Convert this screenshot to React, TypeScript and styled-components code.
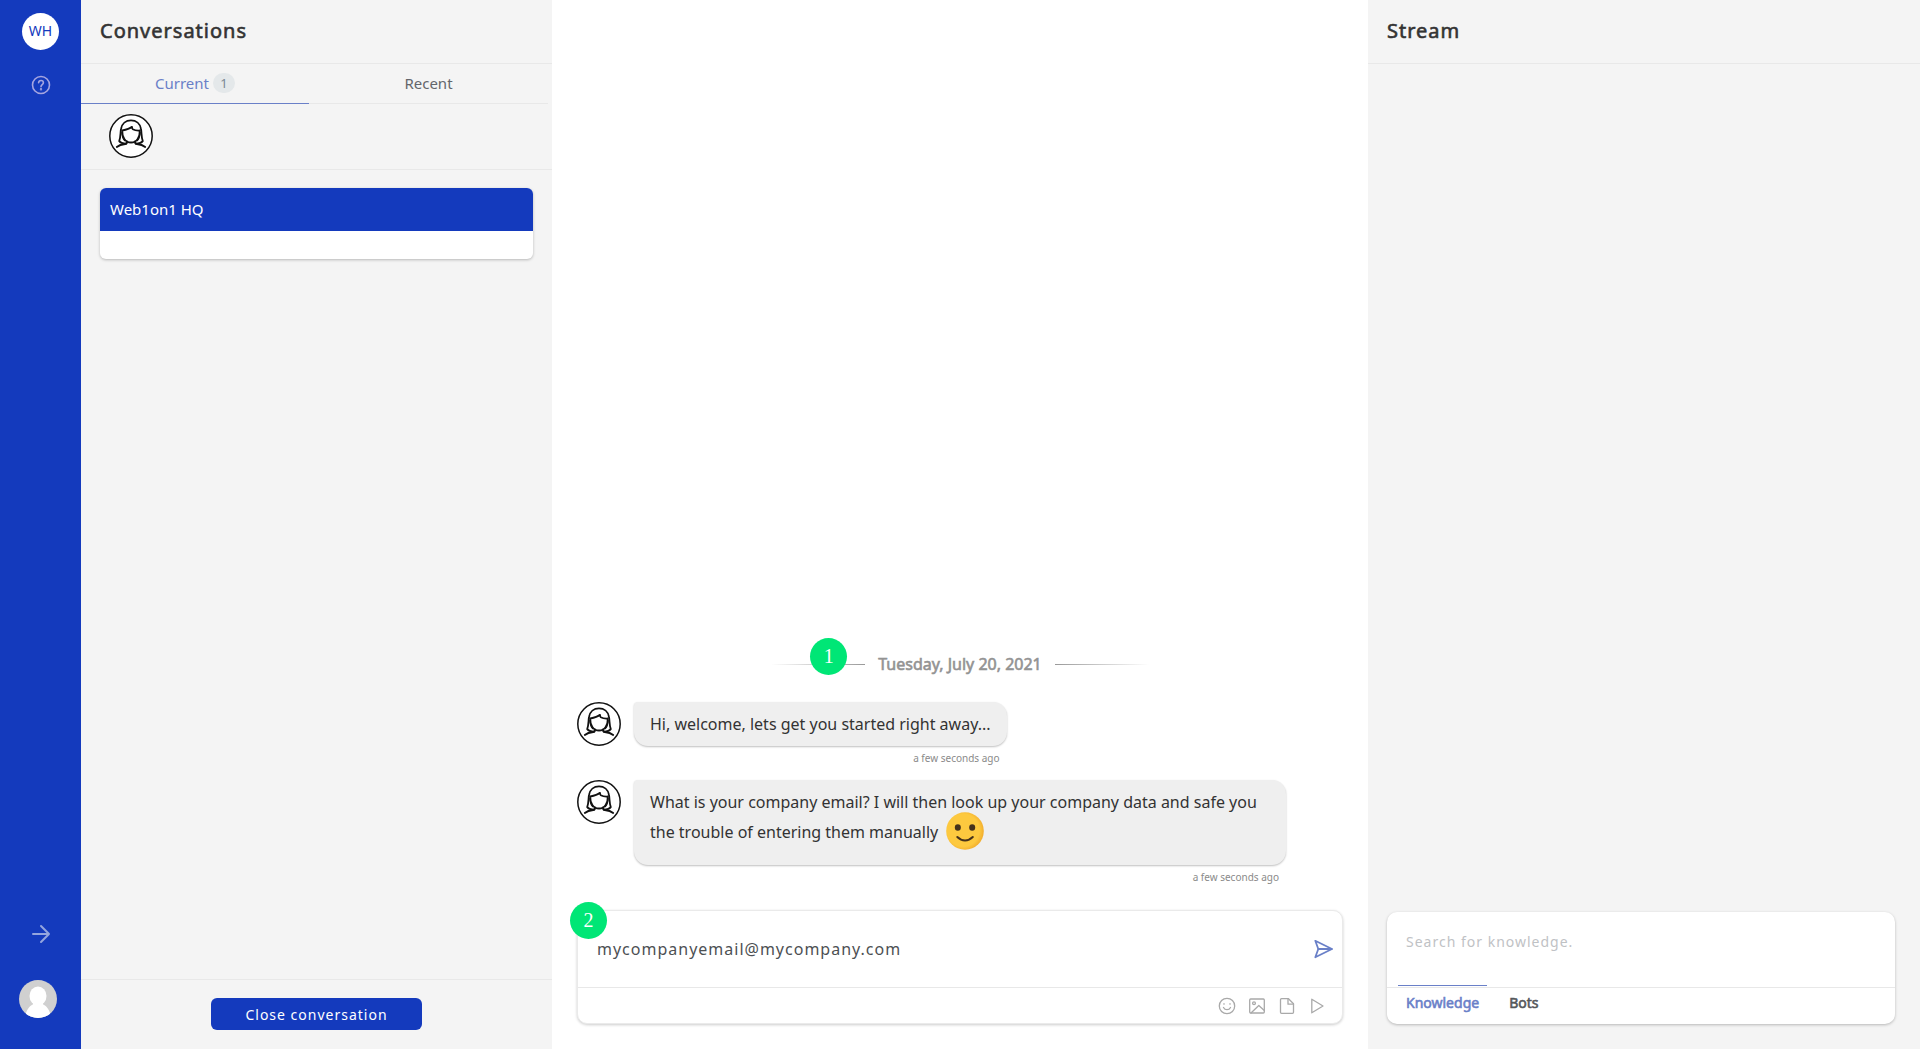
import React from "react";
import styled, { createGlobalStyle, css } from "styled-components";

const GlobalStyle = createGlobalStyle`
  *, *::before, *::after { box-sizing: border-box; }
  body {
    margin: 0;
    background: #fff;
    color: #333;
    font-family: "Noto Sans", "Open Sans", sans-serif;
    font-size: 15px;
  }
  button, input, textarea { font-family: inherit; }
`;

const BLUE = "#143abd";
const ACCENT = "#6a80c8";
const LINE = "#e8e8e8";

/* Regular weight thickened by an outline */
const emphasis = css`
  font-weight: 400;
  -webkit-text-stroke: 0.6px currentColor;
`;

const Shell = styled.div`
  display: grid;
  grid-template-columns: 81px 471fr 816fr 552fr;
  height: 100vh;
`;

/* Rail */
const Rail = styled.nav`
  display: flex;
  flex-direction: column;
  align-items: center;
  padding: 13px 0 31px;
  background: ${BLUE};
`;

const IconButton = styled.button<{ $color: string }>`
  display: flex;
  align-items: center;
  justify-content: center;
  padding: 0;
  border: 0;
  background: none;
  color: ${(p) => p.$color};
  cursor: pointer;
`;

const Initials = styled.button`
  width: 37px;
  height: 37px;
  margin-bottom: 25px;
  padding: 0 0 2px;
  border: 0;
  border-radius: 50%;
  background: #fff;
  color: ${BLUE};
  font-size: 14px;
`;

const RailSpacer = styled.div`
  flex: 1;
`;

const Profile = styled.button`
  display: flex;
  align-self: flex-start;
  margin: 36px 0 0 19px;
  padding: 0;
  border: 0;
  background: none;
`;

/* Side panels */
const Panel = styled.section`
  display: flex;
  flex-direction: column;
  min-width: 0;
  background: #f4f4f4;
`;

const PanelHeader = styled.header`
  display: flex;
  align-items: center;
  height: 64px;
  padding: 0 19px 1px;
  border-bottom: 1px solid ${LINE};
`;

const PanelTitle = styled.h1`
  margin: 0;
  ${emphasis}
  font-size: 20px;
  letter-spacing: 1px;
  line-height: 30px;
`;

const Tabs = styled.div`
  display: grid;
  grid-template-columns: 228px 1fr;
  height: 40px;
  padding-right: 4px;
`;

const Tab = styled.button<{ $active?: boolean }>`
  display: flex;
  align-items: center;
  justify-content: center;
  gap: 4px;
  padding: 0 0 2px;
  border: 0;
  border-bottom: 1px solid ${(p) => (p.$active ? ACCENT : LINE)};
  background: none;
  color: ${(p) => (p.$active ? ACCENT : "#63666b")};
  font-size: 15px;
`;

const Count = styled.span`
  width: 22px;
  border-radius: 10px;
  background: #e4e8ea;
  color: #7b8794;
  font-size: 13px;
  line-height: 20px;
`;

const Agents = styled.div`
  display: flex;
  height: 66px;
  padding: 10px 28px;
  border-bottom: 1px solid ${LINE};
`;

const ConversationList = styled.div`
  flex: 1;
  padding: 18px 19px;
`;

const ConversationCard = styled.article`
  overflow: hidden;
  border-radius: 6px;
  background: #fff;
  box-shadow: 0 1px 3px rgba(0, 0, 0, 0.25);
`;

const ConversationName = styled.h2`
  margin: 0;
  padding: 0 10px;
  background: ${BLUE};
  color: #fff;
  font-size: 15px;
  font-weight: 400;
  line-height: 43px;
`;

const ConversationPreview = styled.p`
  height: 28px;
  margin: 0;
`;

const PanelFooter = styled.footer`
  display: flex;
  justify-content: center;
  height: 70px;
  padding: 18px 0;
  border-top: 1px solid ${LINE};
`;

const PrimaryButton = styled.button`
  height: 32px;
  padding: 0 34px;
  border: 0;
  border-radius: 6px;
  background: ${BLUE};
  color: #fff;
  font-size: 14px;
  letter-spacing: 1px;
`;

/* Chat */
const Chat = styled.main`
  display: flex;
  flex-direction: column;
  justify-content: flex-end;
  min-width: 0;
  padding: 0 25px 25px;
`;

const DateDivider = styled.div`
  position: relative;
  display: flex;
  align-items: center;
  align-self: center;
  gap: 13px;
  margin-bottom: 23px;
  color: #939393;
  ${emphasis}
  font-size: 16px;
  line-height: 30px;
`;

const Rule = styled.span<{ $to: string }>`
  width: 94px;
  height: 1px;
  background: linear-gradient(to ${(p) => p.$to}, #999, transparent);
`;

const Marker = styled.span<{ $left: number; $top: number }>`
  position: absolute;
  top: ${(p) => p.$top}px;
  left: ${(p) => p.$left}px;
  width: 37px;
  height: 37px;
  border-radius: 50%;
  background: #00e676;
  color: #fff;
  font: 20px/37px "Liberation Serif", serif;
  text-align: center;
  -webkit-text-stroke: 0;
`;

const Message = styled.article`
  display: flex;
  align-items: flex-start;
  gap: 13px;
`;

const MessageBody = styled.div`
  max-width: 652px;
`;

const Bubble = styled.p`
  margin: 0;
  padding: 7px 16px;
  border-radius: 4px 14px 14px 14px;
  background: #efefef;
  box-shadow: 0 1px 2px rgba(0, 0, 0, 0.25);
  font-size: 16px;
  line-height: 30px;
`;

const Timestamp = styled.time`
  display: block;
  margin: 5px 0 15px;
  padding-right: 7px;
  color: #8a8a8a;
  font-size: 10px;
  line-height: 14px;
  text-align: right;
`;

const Emoji = styled.svg`
  width: 38px;
  height: 38px;
  margin: -5px 4px 8px;
  vertical-align: top;
`;

const Composer = styled.form`
  position: relative;
  margin-top: 11px;
  border: 1px solid #eaeaea;
  border-radius: 10px;
  background: #fff;
  box-shadow: 0 1px 3px rgba(0, 0, 0, 0.2);
`;

const ComposerRow = styled.div`
  display: flex;
  align-items: center;
  height: 76px;
  padding: 0 9px 0 19px;
`;

const TextField = styled.input`
  flex: 1;
  min-width: 0;
  padding: 0;
  border: 0;
  outline: 0;
  background: none;
  color: #4d5053;
  font-size: 16px;
  letter-spacing: 1px;
`;

const Toolbar = styled.div`
  display: flex;
  align-items: center;
  justify-content: flex-end;
  gap: 12px;
  height: 36px;
  padding: 0 16px;
  border-top: 1px solid ${LINE};
`;

/* Knowledge search */
const StreamBody = styled.div`
  flex: 1;
`;

const SearchCard = styled.form`
  margin: 0 25px 25px 19px;
  border-radius: 10px;
  background: #fff;
  box-shadow: 0 1px 3px rgba(0, 0, 0, 0.25);
`;

const SearchRow = styled.div`
  display: flex;
  height: 75px;
  padding: 17px 19px;
`;

const SearchField = styled.input`
  flex: 1;
  height: 24px;
  padding: 0;
  border: 0;
  outline: 0;
  background: none;
  font-size: 14px;
  letter-spacing: 1px;
  &::placeholder { color: #bfc2c5; }
`;

const SearchTabs = styled.div`
  display: flex;
  gap: 14px;
  height: 37px;
  padding: 0 11px;
  border-top: 1px solid ${LINE};
`;

const SearchTab = styled.button<{ $active?: boolean }>`
  height: 31px;
  margin-top: -3px;
  padding: 2px 8px 0;
  border: 0;
  border-top: 1px solid ${(p) => (p.$active ? ACCENT : "transparent")};
  background: none;
  color: ${(p) => (p.$active ? ACCENT : "#55585b")};
  ${emphasis}
  font-size: 14px;
`;

const AgentAvatar = () => (
  <svg width="44" height="44" viewBox="0 0 44 44" fill="none" stroke="#111" strokeWidth="1.800" strokeLinecap="round" strokeLinejoin="round" role="img" aria-label="Agent">
    <circle cx="22" cy="22" r="21.2" fill="#fff" strokeWidth="1.500" />
    <path d="M17 29.5c-3 .2-5.500-.8-6.800-2.400C11.800 23 11.300 18.500 12 15 12.800 9.500 17 6.300 22 6.300s9.200 3.200 10 8.700c.7 3.500.2 8 1.800 12.100-1.300 1.600-3.800 2.600-6.800 2.400" />
    <path d="M13.200 16.500c-.2 6.500 3 12 8.800 12s9-5.500 8.800-12c-3 .2-5.300-.3-7-1.300-.8-.5-.8-1.400-.8-2.400-2.400 2-5.600 2.900-9.800 3.700z" />
    <path d="M12.800 18.500c.2 3 .8 6 2.800 8.200M31.200 18.500c-.2 3-.8 6-2.800 8.200" strokeWidth="1.200" />
    <path d="M18 27.500c.1 1.600-.5 2.400-1.800 2.500-3.500.3-6.400 1.300-8.400 3M26 27.500c-.1 1.600.5 2.400 1.800 2.500 3.500.3 6.400 1.300 8.400 3" />
  </svg>
);

const strokeProps = {
  fill: "none",
  stroke: "currentColor",
  strokeLinecap: "round" as const,
  strokeLinejoin: "round" as const,
};

const HelpIcon = () => (
  <svg width="20" height="20" viewBox="0 0 20 20" strokeWidth="1.600" {...strokeProps}>
    <circle cx="10" cy="10" r="8.500" />
    <path d="M7.600 7.800C7.700 6.400 8.700 5.500 10 5.500s2.400.9 2.400 2.200c0 1.900-2.400 2-2.400 4" />
    <circle cx="10" cy="14.200" r=".4" />
  </svg>
);

const ArrowIcon = () => (
  <svg width="20" height="20" viewBox="0 0 20 20" strokeWidth="2" {...strokeProps}>
    <path d="M2 10h16M10 2l8 8-8 8" />
  </svg>
);

const PersonIcon = () => (
  <svg width="38" height="38" viewBox="0 0 38 38" role="img" aria-label="Profile">
    <defs>
      <clipPath id="person"><circle cx="19" cy="19" r="19" /></clipPath>
    </defs>
    <g clipPath="url(#person)">
      <rect width="38" height="38" fill="#d0d0d0" />
      <g fill="#fff">
        <ellipse cx="19" cy="16" rx="8.500" ry="9.500" />
        <rect x="14" y="20" width="10" height="8" />
        <path d="M6 38c1-8 4.500-13 9.500-14h7C27.500 25 31 30 32 38z" />
      </g>
    </g>
  </svg>
);

const SendIcon = () => (
  <svg width="20" height="20" viewBox="0 0 20 20" strokeWidth="1.800" {...strokeProps}>
    <path d="M2.300 1.800L19 10 2.300 18.200 5.300 10z" />
    <path d="M5.300 10H18.500" />
  </svg>
);

const SmileIcon = () => (
  <svg width="18" height="18" viewBox="0 0 18 18" strokeWidth="1.300" {...strokeProps}>
    <circle cx="9" cy="9" r="7.700" />
    <path d="M5.500 10.500c.8 1.500 2 2.200 3.500 2.200s2.700-.7 3.500-2.200" />
    <path d="M6 7.200v-.5M12 7.200v-.5" />
  </svg>
);

const ImageIcon = () => (
  <svg width="18" height="18" viewBox="0 0 18 18" strokeWidth="1.300" {...strokeProps}>
    <rect x="1.700" y="2" width="14.600" height="14" rx="1" />
    <circle cx="6" cy="6.300" r="1.400" />
    <path d="M3 16l7.800-7.500L16.300 13.500" />
  </svg>
);

const FileIcon = () => (
  <svg width="18" height="18" viewBox="0 0 18 18" strokeWidth="1.300" {...strokeProps}>
    <path d="M3.500 1.700h7l5 5v8.600a1 1 0 0 1-1 1h-11a1 1 0 0 1-1-1V2.700a1 1 0 0 1 1-1z" />
    <path d="M10 1.700v5.500h5.500" />
  </svg>
);

const PlayIcon = () => (
  <svg width="18" height="18" viewBox="0 0 18 18" strokeWidth="1.300" {...strokeProps}>
    <path d="M3.800 2.200L15 9 3.800 15.800z" />
  </svg>
);

const SmilingFace = () => (
  <Emoji viewBox="0 0 38 38" role="img" aria-label="Smiling face">
    <defs>
      <radialGradient id="face" cx="45%" cy="48%" r="54%">
        <stop offset="0.800" stopColor="#fdc93f" />
        <stop offset="1" stopColor="#f3b02f" />
      </radialGradient>
    </defs>
    <circle cx="19" cy="19" r="18.800" fill="url(#face)" />
    <ellipse cx="11.800" cy="15.500" rx="3" ry="3.300" fill="#45311b" />
    <ellipse cx="26.200" cy="15.500" rx="3" ry="3.300" fill="#45311b" />
    <path d="M11.300 25c4.500 4.500 11 4.500 15.500 0" fill="none" stroke="#45311b" strokeWidth="2" strokeLinecap="round" />
  </Emoji>
);

const tools = [
  { label: "Insert emoji", Icon: SmileIcon },
  { label: "Attach image", Icon: ImageIcon },
  { label: "Attach file", Icon: FileIcon },
  { label: "Run command", Icon: PlayIcon },
];

export default function App() {
  return (
    <>
      <GlobalStyle />
      <Shell>
        <Rail>
          <Initials type="button">WH</Initials>
          <IconButton type="button" aria-label="Help" $color="#a5a5e0"><HelpIcon /></IconButton>
          <RailSpacer />
          <IconButton type="button" aria-label="Expand" $color="#94a5de"><ArrowIcon /></IconButton>
          <Profile type="button" aria-label="Profile"><PersonIcon /></Profile>
        </Rail>

        <Panel>
          <PanelHeader><PanelTitle>Conversations</PanelTitle></PanelHeader>
          <Tabs>
            <Tab type="button" $active>Current <Count>1</Count></Tab>
            <Tab type="button">Recent</Tab>
          </Tabs>
          <Agents><AgentAvatar /></Agents>
          <ConversationList>
            <ConversationCard>
              <ConversationName>Web1on1 HQ</ConversationName>
              <ConversationPreview />
            </ConversationCard>
          </ConversationList>
          <PanelFooter>
            <PrimaryButton type="button">Close conversation</PrimaryButton>
          </PanelFooter>
        </Panel>

        <Chat>
          <DateDivider>
            <Rule $to="left" />
            Tuesday, July 20, 2021
            <Rule $to="right" />
            <Marker $left={39} $top={-11}>1</Marker>
          </DateDivider>
          <Message>
            <AgentAvatar />
            <MessageBody>
              <Bubble>Hi, welcome, lets get you started right away...</Bubble>
              <Timestamp>a few seconds ago</Timestamp>
            </MessageBody>
          </Message>
          <Message>
            <AgentAvatar />
            <MessageBody>
              <Bubble>
                What is your company email? I will then look up your company data and safe you the trouble of entering them manually <SmilingFace />
              </Bubble>
              <Timestamp>a few seconds ago</Timestamp>
            </MessageBody>
          </Message>
          <Composer onSubmit={(e) => e.preventDefault()}>
            <ComposerRow>
              <TextField type="text" aria-label="Message" defaultValue="mycompanyemail@mycompany.com" />
              <IconButton type="submit" aria-label="Send" $color={ACCENT}><SendIcon /></IconButton>
            </ComposerRow>
            <Toolbar>
              {tools.map(({ label, Icon }) => (
                <IconButton key={label} type="button" aria-label={label} $color="#a9a9a9"><Icon /></IconButton>
              ))}
            </Toolbar>
            <Marker $left={-8} $top={-9}>2</Marker>
          </Composer>
        </Chat>

        <Panel>
          <PanelHeader><PanelTitle>Stream</PanelTitle></PanelHeader>
          <StreamBody />
          <SearchCard onSubmit={(e) => e.preventDefault()}>
            <SearchRow>
              <SearchField type="text" aria-label="Search for knowledge" placeholder="Search for knowledge." />
            </SearchRow>
            <SearchTabs>
              <SearchTab type="button" $active>Knowledge</SearchTab>
              <SearchTab type="button">Bots</SearchTab>
            </SearchTabs>
          </SearchCard>
        </Panel>
      </Shell>
    </>
  );
}
